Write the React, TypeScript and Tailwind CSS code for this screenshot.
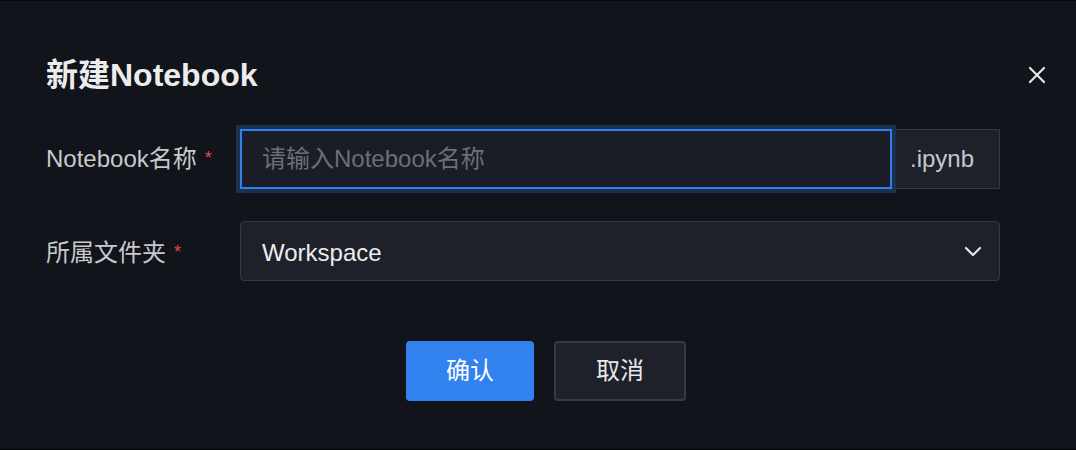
import React from 'react';

const font = { fontFamily: '"Liberation Sans", "Noto Sans CJK SC", sans-serif' };

const Required = () => <span className="ml-[8px] text-[18px] leading-none text-[#e5484d] relative top-[-1px]">*</span>;

const App: React.FC = () => {
  return (
    <div className="w-[1076px] h-[450px] bg-[#11141b] border-y border-[#05060a] overflow-hidden" style={font}>
      <div className="pl-[46px] pr-[30px] pt-[54px]">
        {/* Header */}
        <div className="flex items-center justify-between h-[40px]">
          <h1 className="text-[32px] font-bold text-[#ececed] leading-none">新建Notebook</h1>
          <button className="w-[18px] h-[18px] text-[#e6e6e8]">
            <svg width="18" height="18" viewBox="0 0 18 18" fill="none" stroke="currentColor" strokeWidth="2.2" strokeLinecap="round">
              <path d="M2 2 L16 16 M16 2 L2 16" />
            </svg>
          </button>
        </div>

        {/* Form */}
        <div className="mt-[34px] pr-[46px] flex flex-col gap-[32px]">
          <div className="flex items-center h-[60px]">
            <label className="w-[194px] shrink-0 text-[24px] text-[#c8c9cc] flex items-center">
              Notebook名称<Required />
            </label>
            <div className="flex flex-1 h-[60px]">
              <div className="flex-1 flex items-center bg-[#1a1d25] border-2 border-[#2f80ed] shadow-[0_0_0_4px_#1c3050] px-[20px] relative z-10">
                <input
                  className="w-full bg-transparent outline-none text-[24px] text-[#e8e8ea] placeholder:text-[#6b6f78]"
                  style={font}
                  placeholder="请输入Notebook名称"
                />
              </div>
              <div className="w-[108px] flex items-center px-[18px] bg-[#1e2129] border border-[#343843] border-l-0 text-[24px] text-[#c5c7cc]">
                .ipynb
              </div>
            </div>
          </div>

          <div className="flex items-center h-[60px]">
            <label className="w-[194px] shrink-0 text-[24px] text-[#c8c9cc] flex items-center pt-[4px]">
              所属文件夹<Required />
            </label>
            <div className="flex-1 h-[60px] flex items-center justify-between bg-[#1e2129] border border-[#343843] rounded-[4px] pl-[21px] pr-[17px]">
              <span className="text-[24px] text-[#ededee] pt-[4px]">Workspace</span>
              <svg width="18" height="12" viewBox="0 0 18 12" fill="none" stroke="#e6e6e8" strokeWidth="2.2" strokeLinecap="round" strokeLinejoin="round">
                <path d="M2 3 L9 10 L16 3" />
              </svg>
            </div>
          </div>
        </div>

        {/* Footer */}
        <div className="mt-[60px] flex justify-center gap-[20px]">
          <button className="w-[128px] h-[60px] rounded-[4px] bg-[#3182ef] text-white text-[24px]" style={font}>确认</button>
          <button className="w-[132px] h-[60px] rounded-[4px] bg-[#1e2129] border-2 border-[#363a45] text-[#e8e8ea] text-[24px]" style={font}>取消</button>
        </div>
      </div>
    </div>
  );
};

export default App;
